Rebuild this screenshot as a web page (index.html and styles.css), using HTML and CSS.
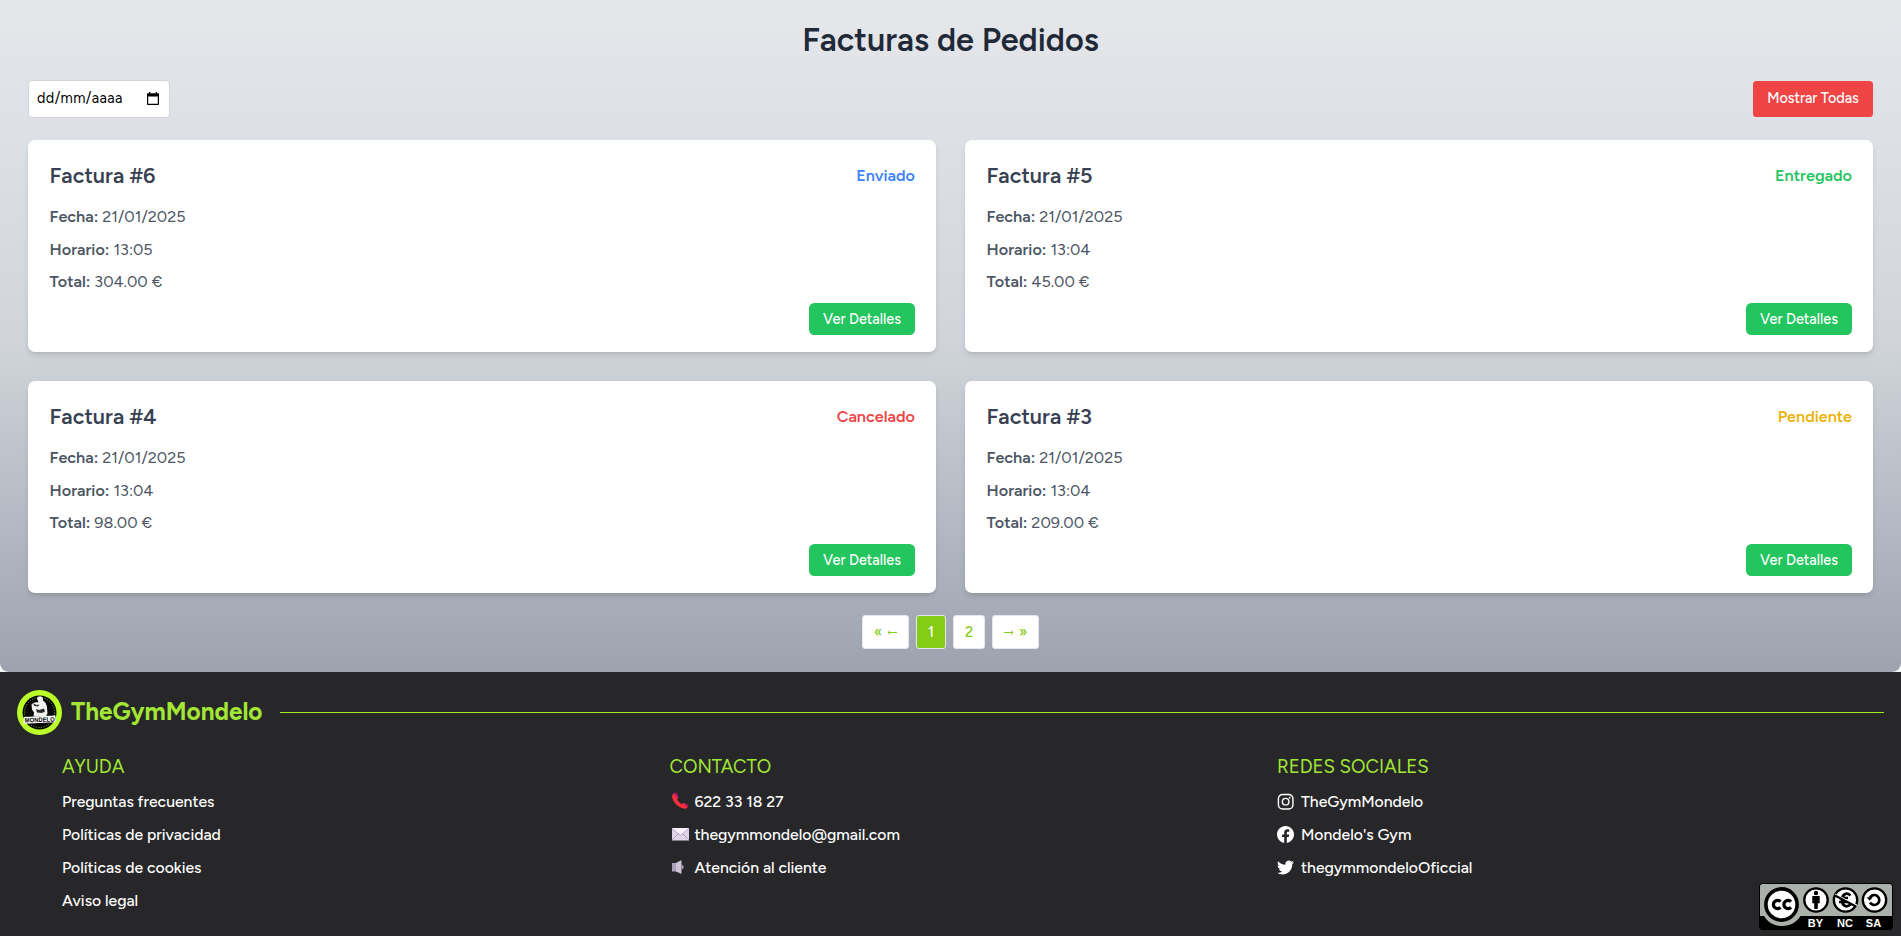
FILE: index.html
```html
<!DOCTYPE html>
<html lang="es">
<head>
<meta charset="utf-8">
<title>Facturas de Pedidos</title>
<link rel="stylesheet" href="styles.css">
</head>
<body>
<main class="page">
  <h1 class="page-title"><span>Facturas de Pedidos</span></h1>
  <div class="toolbar">
    <div class="date-field"><span>dd/mm/aaaa</span>
      <svg class="calendar" viewBox="0 0 12 13"><path d="M2 0h1.300v1.300h5.400V0H10v1.300h1.200c.5 0 .8.300.8.800v10.100c0 .5-.3.800-.8.800H.8c-.5 0-.8-.3-.8-.8V2.100c0-.5.300-.8.800-.8H2zM1.200 4.500v7.300h9.600V4.500z"/></svg>
    </div>
    <button class="btn btn-all"><span>Mostrar Todas</span></button>
  </div>
  <section class="invoices">
    <article class="card">
      <header class="card-head"><h2><span>Factura #6</span></h2><span class="status sent">Enviado</span></header>
      <p><b>Fecha:</b> <span>21/01/2025</span></p><p><b>Horario:</b> <span>13:05</span></p><p><b>Total:</b> <span>304.00 €</span></p>
      <div class="card-foot"><button class="btn btn-detail"><span>Ver Detalles</span></button></div>
    </article>
    <article class="card">
      <header class="card-head"><h2><span>Factura #5</span></h2><span class="status done">Entregado</span></header>
      <p><b>Fecha:</b> <span>21/01/2025</span></p><p><b>Horario:</b> <span>13:04</span></p><p><b>Total:</b> <span>45.00 €</span></p>
      <div class="card-foot"><button class="btn btn-detail"><span>Ver Detalles</span></button></div>
    </article>
    <article class="card">
      <header class="card-head"><h2><span>Factura #4</span></h2><span class="status cancelled">Cancelado</span></header>
      <p><b>Fecha:</b> <span>21/01/2025</span></p><p><b>Horario:</b> <span>13:04</span></p><p><b>Total:</b> <span>98.00 €</span></p>
      <div class="card-foot"><button class="btn btn-detail"><span>Ver Detalles</span></button></div>
    </article>
    <article class="card">
      <header class="card-head"><h2><span>Factura #3</span></h2><span class="status pending">Pendiente</span></header>
      <p><b>Fecha:</b> <span>21/01/2025</span></p><p><b>Horario:</b> <span>13:04</span></p><p><b>Total:</b> <span>209.00 €</span></p>
      <div class="card-foot"><button class="btn btn-detail"><span>Ver Detalles</span></button></div>
    </article>
  </section>
  <nav class="pager">
    <a class="edge">«
      <svg viewBox="0 0 10 6"><path d="M10 3.500H1M3 1.700 1 3.500l2 1.800"/></svg></a>
    <a class="num current">1</a>
    <a class="num other">2</a>
    <a class="edge"><svg viewBox="0 0 10 6"><path d="M0 3.500h9M7 1.700l2 1.800-2 1.800"/></svg>
      »</a>
  </nav>
</main>
<footer class="footer">
  <div class="brand">
    <svg class="logo" viewBox="0 0 45 45">
      <circle cx="22.500" cy="22.500" r="22.500" fill="#baff29"/>
      <circle cx="22.500" cy="22.500" r="17" fill="#050505"/>
      <circle cx="22.500" cy="22.500" r="15" fill="none" stroke="#8fc41f" stroke-width=".8" stroke-dasharray="1.200 1.400"/>
      <path d="M20 8.500c.5-2 3.500-3 5-1.500 1.200 1 1.300 2.500.8 3.500 2.500 1.500 4 3.500 4.200 7l.5 6-1.500 3H16.500l.5-4-2-3-.5-5c1.500-2 4-2.500 7-2z" fill="#f2f2f2"/>
      <path d="M15.500 13l2 3 3.500.5 1.500-2-3 .5zM19 19l3 1 5-1.500 1 3-3 1.500-5-.5z" fill="#2b2b2b"/>
      <path d="M6.500 27 38.500 25.500v6.700l-32 1.500z" fill="#fff"/>
      <text x="22.700" y="32" transform="rotate(-2 22.500 30)" text-anchor="middle" textLength="30" lengthAdjust="spacingAndGlyphs" class="logo-text">MONDELO</text>
    </svg>
    <span class="brand-name">TheGymMondelo</span>
    <hr>
  </div>
  <div class="columns">
    <section>
      <h3>AYUDA</h3>
      <a>Preguntas frecuentes</a><a>Políticas de privacidad</a><a>Políticas de cookies</a><a>Aviso legal</a>
    </section>
    <section>
      <h3>CONTACTO</h3>
      <a><svg class="emoji" viewBox="0 0 25 18"><path d="M4 1.200c1.200-.8 2.300-.4 2.900.6l1.300 2.500c.4.900 0 1.600-1.100 2.400.8 2.500 2.600 4.400 5 5.500.9-1 1.700-1.400 2.600-.9l2.500 1.400c1 .7 1.200 1.600.5 2.600-.9 1.400-2.800 1.700-5 1C7.300 14.700 3.300 10.200 2.200 5.500 1.900 3.500 2.500 2 4 1.200z" fill="#f92f3c"/><path d="M4 1.200c1.200-.8 2.300-.4 2.900.6l1.300 2.500c.3.700.1 1.200-.5 1.800L3.500 1.500zM14.700 11.300l2.500 1.400c1 .7 1.200 1.600.5 2.600l-4-3.500c.4-.4.7-.5 1-.5z" fill="#a8166f"/></svg>622 33 18 27</a>
      <a><svg class="emoji" viewBox="0 0 25 18"><path d="M2 3h17v12.500H2z" fill="#e0d5e8"/><path d="m2 3.500 8.500 7 8.500-7V3H2z" fill="#f6f1f9"/><path d="m2 3.500 8.500 7 8.500-7M2 15l6-6m11 6-6-6" fill="none" stroke="#a996b8" stroke-width=".8"/></svg>thegymmondelo@gmail.com</a>
      <a><svg class="emoji" viewBox="0 0 25 18"><path d="M2 5h5v8.500H2z" fill="#ada1b9"/><path d="m6 5 4.500-2.500h1v13h-1L6 13.500z" fill="#cdc4d6"/><path d="M11.500 6.500c1.500.5 2.300 1.500 2.300 2.600s-.8 2-2.300 2.500z" fill="#a597b3"/></svg>Atención al cliente</a>
    </section>
    <section>
      <h3>REDES SOCIALES</h3>
      <a><svg class="social" viewBox="0 0 24 24"><g fill="none" stroke="#fff" stroke-width="2"><rect x="2" y="2" width="20.500" height="20.500" rx="6"/><circle cx="12.200" cy="12.200" r="4.600"/></g><circle cx="17.900" cy="6.600" r="1.300" fill="#fff"/></svg>TheGymMondelo</a>
      <a><svg class="social" viewBox="0 0 24 24"><path fill="#fff" d="M24 12.073c0-6.627-5.373-12-12-12s-12 5.373-12 12c0 5.990 4.388 10.954 10.125 11.854v-8.385H7.078v-3.470h3.047V9.430c0-3.007 1.792-4.669 4.533-4.669 1.312 0 2.686.235 2.686.235v2.953H15.830c-1.491 0-1.956.925-1.956 1.874v2.250h3.328l-.532 3.470h-2.796v8.385C19.612 23.027 24 18.062 24 12.073z"/></svg>Mondelo's Gym</a>
      <a><svg class="social" viewBox="0 0 24 24"><path fill="#fff" d="M23.953 4.570a10 10 0 0 1-2.825.775 4.958 4.958 0 0 0 2.163-2.723c-.951.555-2.005.959-3.127 1.184a4.920 4.920 0 0 0-8.384 4.482C7.690 8.095 4.067 6.130 1.640 3.162a4.822 4.822 0 0 0-.666 2.475c0 1.710.87 3.213 2.188 4.096a4.904 4.904 0 0 1-2.228-.616v.060a4.923 4.923 0 0 0 3.946 4.827 4.996 4.996 0 0 1-2.212.085 4.936 4.936 0 0 0 4.604 3.417 9.867 9.867 0 0 1-6.102 2.105c-.390 0-.779-.023-1.170-.067a13.995 13.995 0 0 0 7.557 2.209c9.053 0 13.998-7.496 13.998-13.985 0-.210 0-.420-.015-.630A9.935 9.935 0 0 0 24 4.590z"/></svg>thegymmondeloOficcial</a>
    </section>
  </div>
</footer>
<svg class="license" viewBox="0 0 134 47">
  <rect width="134" height="47" rx="4" fill="#000"/>
  <path d="M3.500 1h127c1.500 0 2.500 1 2.500 2.500V33H41.500C37.500 39.500 31 43 23 43S9 39.500 5 33H1V3.500C1 2 2 1 3.500 1z" fill="#abb1aa"/>
  <circle cx="22.500" cy="21.500" r="15.600" fill="#fff" stroke="#000" stroke-width="3.600"/>
  <g fill="none" stroke="#000" stroke-width="3.300"><path d="M21.500 18.700a4.100 4.100 0 1 0 0 5.600M32 18.700a4.100 4.100 0 1 0 0 5.600"/></g>
  <g fill="#fff" stroke="#000" stroke-width="2.300"><circle cx="57" cy="17" r="11.700"/><circle cx="86.500" cy="17" r="11.700"/><circle cx="115.500" cy="17" r="11.700"/></g>
  <circle cx="57" cy="10" r="2.200"/><path d="M53.300 13h7.400v7.300h-1.900v5.700h-3.600v-5.700h-1.900z"/>
  <g fill="none" stroke="#000" stroke-width="2.700"><path d="M91.500 12.500c-4-3.500-8.500-1.500-8.500 4.500s4.500 8 8.500 4.500M80 15h9M80 19h9"/><path d="M111 14.500a5 5 0 1 1 0 5"/></g>
  <path d="M76 11.500 98 22.500" stroke="#fff" stroke-width="1.500"/><path d="M76 12.500 97 23.500" stroke="#000" stroke-width="2"/>
  <path d="m107.700 14.200 6 0-3 3.500z"/>
  <g class="license-text"><text x="56.500" y="44">BY</text><text x="86" y="44">NC</text><text x="114.500" y="44">SA</text></g>
</svg>
</body>
</html>
```
FILE: styles.css
```css
* { box-sizing: border-box; margin: 0; }
body { height: 936px; background: #f3f4f6; font-family: Figtree, Lato, sans-serif; font-size: 16.2px; overflow: hidden; position: relative; display: flex; flex-direction: column; }
svg { display: block; flex: none; }
.page { height: 672px; padding: 20px 28px 0; border-radius: 0 0 9px 9px; background: linear-gradient(#e5e7eb, #d1d5db 50%, #9ca3af); }
.footer { flex: 1; background: #27272a; padding: 18px 17px 0; }
.page-title { font-size: 32.4px; line-height: 40px; font-weight: 600; text-align: center; color: #1f2937; }
.toolbar { display: flex; justify-content: space-between; align-items: center; height: 38px; margin: 20px 0 22px; }
.date-field { width: 142px; height: 38px; background: #fff; border: 1px solid #d1d5db; border-radius: 4px; display: flex; align-items: center; justify-content: space-between; padding: 0 10px 1px 8px; font-size: 14.4px; letter-spacing: .38px; }
.date-field span { padding-bottom: 1px; }
.calendar { width: 12px; height: 13px; }
.btn { border: 0; color: #fff; font: 500 14.4px/20px Figtree, Lato, sans-serif; padding: 0; white-space: nowrap; }
.btn-all { background: #ef4444; width: 120px; height: 36px; border-radius: 3.600px; padding-bottom: 2px; letter-spacing: -.04px; }
.invoices { display: grid; grid-template-columns: 908px 908px; gap: 29px; }
.card { height: 212px; background: #fff; border-radius: 7px; padding: 20.600px 21px 17px 21.600px; box-shadow: 0 4px 6px -1px rgba(0,0,0,.1), 0 2px 4px -2px rgba(0,0,0,.1); display: flex; flex-direction: column; }
.card-head { display: flex; justify-content: space-between; align-items: center; height: 29px; margin-bottom: 14.700px; }
.card h2 { font-size: 21.600px; font-weight: 600; color: #374151; line-height: 28.800px; }
.status { font-weight: 600; }
.sent { color: #3b82f6; } .done { color: #22c55e; } .cancelled { color: #ef4444; } .pending { color: #eab308; }
.card p { color: #4b5563; line-height: 25.200px; margin-bottom: 7.200px; }
.card b { font-weight: 600; }
.card-foot { display: flex; justify-content: flex-end; margin-top: auto; }
.btn-detail { background: #22c55e; width: 106px; height: 32px; border-radius: 5.400px; }
.pager { display: flex; justify-content: center; gap: 7px; margin-top: 22px; font-size: 14.400px; color: #84cc16; font-weight: 500; }
.pager a { height: 34px; border: 1px solid #e5e7eb; border-radius: 3px; background: #fff; display: flex; align-items: center; justify-content: center; gap: 5px; }
.pager svg { width: 10px; height: 6px; fill: none; stroke: #84cc16; stroke-width: 1; }
.edge { width: 47px; } .current { width: 30px; } .other { width: 32px; }
.pager .current { background: #84cc16; color: #fff; }
.brand { display: flex; align-items: center; height: 45px; }
.logo { width: 45px; height: 45px; margin-right: 9px; }
.logo-text { font: 900 6.500px "Liberation Sans", sans-serif; fill: #000; }
.brand-name { width: 209px; font-size: 24.300px; line-height: 30px; padding-bottom: 1px; font-weight: 700; color: #a3e635; white-space: nowrap; }
.brand hr { flex: 1; border: 0; height: 1px; background: #a3f01e; }
.columns { display: grid; grid-template-columns: repeat(3, 607.500px); padding-left: 45px; margin-top: 18px; }
.columns h3 { font-size: 18.650px; font-weight: 400; color: #a3e635; line-height: 28px; margin-bottom: 3.500px; }
.columns a { display: flex; align-items: center; height: 33px; color: #fff; white-space: nowrap; font-size: 15.750px; font-weight: 500; }
.emoji { width: 25px; height: 18px; }
.social { width: 17px; height: 17px; margin-right: 7px; }
.license { position: absolute; left: 1759px; top: 883px; width: 134px; height: 47px; }
.license-text { font: 700 11px "Liberation Sans", sans-serif; fill: #fff; text-anchor: middle; }
```
